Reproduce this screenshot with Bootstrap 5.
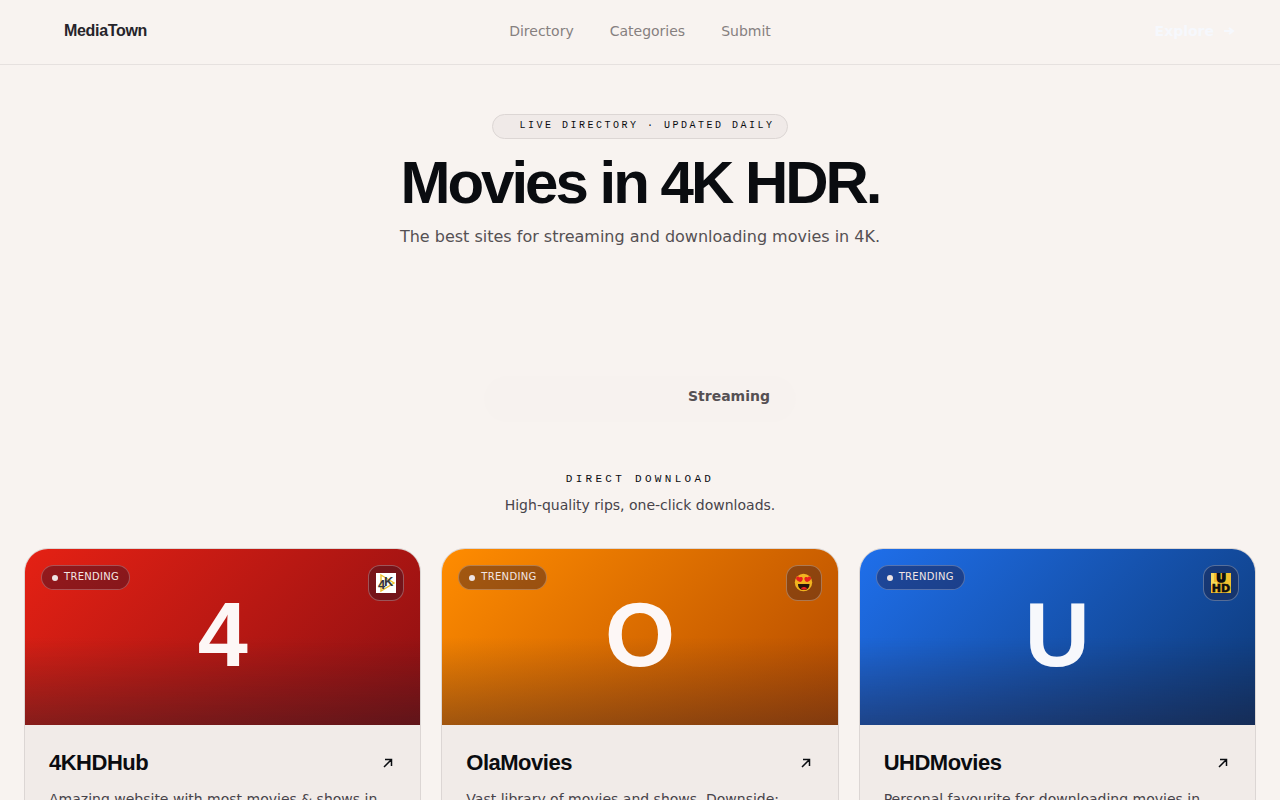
<!DOCTYPE html>
<html lang="en">
<head>
<meta charset="utf-8">
<meta name="viewport" content="width=device-width, initial-scale=1">
<title>MediaTown – Movies in 4K HDR</title>
<link rel="stylesheet" href="https://cdn.jsdelivr.net/npm/bootstrap@5.3.0/dist/css/bootstrap.min.css">
<style>
  body { background: #f8f3f0; color: #0a0c10; font-family: "DejaVu Sans", sans-serif; font-size: 14px; line-height: 20px; }
  .display-face { font-family: "Liberation Sans", sans-serif; font-weight: 700; }
  .mono-face { font-family: "Liberation Mono", monospace; text-transform: uppercase; }
  .topbar { height: 65px; border-bottom: 1px solid #e6e1df; padding: 0 44px 2px; }
  .topbar .side { flex: 1 1 0; }
  .brand { font-size: 16px; letter-spacing: -0.32px; color: #26242a; margin-left: 20px; }
  .topbar .nav-link { color: #86807f; padding: 0; }
  .nav-gap { gap: 36px; }
  .explore { color: #f6f8fd; font-weight: 700; font-size: 14px; border: 0; padding: 0; gap: 10px; }
  .live-pill { background: #f0eae8; border: 1px solid #dcd6d4; border-radius: 13px; height: 25px; font-size: 10px; line-height: 22px; letter-spacing: 2.5px; padding: 0 12px 0 26px; }
  .hero { padding-top: 49px; }
  .hero-title { font-size: 60px; line-height: 60px; letter-spacing: -3px; margin: 14px 0 0; }
  .hero-text { font-size: 16px; line-height: 24px; color: #555053; margin: 12px 0 0; }
  .switcher { margin-top: 127px; background: #f7f2ef; border-radius: 23px; height: 46px; width: 312px; }
  .switcher .btn { border: 0; font-size: 14px; font-weight: 700; color: #555053; padding: 0 0 5px; }
  .switcher .btn-first { width: 178px; }
  .section-label { font-size: 11px; line-height: 16px; letter-spacing: 3.3px; font-weight: 400; margin: 49px 0 0; }
  .section-text { color: #47434a; margin: 8px 0 33px; }
  .site-row { --bs-gutter-x: 20px; --bs-gutter-y: 20px; }
  .site-card { background: #f1ebe8; border: 1px solid #dcd6d4; border-radius: 24px; overflow: hidden; }
  .cover { height: 176px; position: relative; padding-bottom: 4px; }
  .cover-red { background: linear-gradient(transparent 50%, rgba(26, 30, 38, .38)), linear-gradient(135deg, #e52114, #8b0f12); }
  .cover-orange { background: linear-gradient(transparent 50%, rgba(46, 30, 38, .38)), linear-gradient(135deg, #ff8c00, #b34a00); }
  .cover-blue { background: linear-gradient(transparent 50%, rgba(36, 26, 38, .38)), linear-gradient(135deg, #1f6feb, #0d3875); }
  .cover-letter { font-size: 90px; line-height: 90px; color: #fdf7f6; }
  .cover-blue .cover-letter { color: #f7f8fc; }
  .trend { position: absolute; top: 16px; left: 16px; height: 25px; border: 1px solid rgba(255, 255, 255, .25); border-radius: 13px; background: rgba(30, 15, 40, .4); color: #f3e6e4; font-size: 10px; letter-spacing: .3px; line-height: 20px; padding: 0 10px 2px; gap: 6px; }
  .trend-dot { width: 6px; height: 6px; border-radius: 50%; background: #eee4e4; margin-top: 3px; }
  .site-icon { position: absolute; top: 16px; right: 16px; width: 36px; height: 36px; border: 1px solid rgba(255, 255, 255, .28); border-radius: 12px; background: rgba(30, 20, 40, .35); }
  .site-body { padding: 24px; }
  .site-name { font-size: 22px; line-height: 28px; letter-spacing: -0.5px; margin: 0; }
  .site-name a { color: inherit; }
  .site-desc { color: #47434a; line-height: 22px; margin: 11px 0 0; }
</style>
</head>
<body>
<header class="topbar d-flex align-items-center">
  <div class="side"><a href="#" class="brand display-face text-decoration-none">MediaTown</a></div>
  <nav class="nav nav-gap" aria-label="Main">
    <a class="nav-link" href="#directory">Directory</a>
    <a class="nav-link" href="#categories">Categories</a>
    <a class="nav-link" href="#submit">Submit</a>
  </nav>
  <div class="side d-flex justify-content-end">
    <button type="button" class="btn explore d-flex align-items-center">Explore
      <svg width="12" height="12" viewBox="0 0 12 12" fill="none" stroke="currentColor" stroke-width="2" aria-hidden="true"><path d="M0 6h9M5 3l4 3-4 3"/></svg>
    </button>
  </div>
</header>

<main>
  <section class="hero d-flex flex-column align-items-center text-center">
    <div class="live-pill mono-face">Live directory · Updated daily</div>
    <h1 class="hero-title display-face">Movies in 4K HDR.</h1>
    <p class="hero-text">The best sites for streaming and downloading movies in 4K.</p>
    <div class="switcher d-flex" role="group" aria-label="Type of site">
      <button type="button" class="btn btn-first" aria-label="Direct download"></button>
      <button type="button" class="btn flex-grow-1 text-center">Streaming</button>
    </div>
  </section>

  <section id="directory" class="px-4">
    <div class="text-center">
      <h2 class="section-label mono-face">Direct download</h2>
      <p class="section-text">High-quality rips, one-click downloads.</p>
    </div>
    <div class="row site-row row-cols-3">
      <div class="col">
        <article class="site-card">
          <div class="cover cover-red d-flex align-items-center justify-content-center">
            <span class="trend d-flex align-items-center"><span class="trend-dot"></span>TRENDING</span>
            <span class="cover-letter display-face">4</span>
            <span class="site-icon d-flex align-items-center justify-content-center">
              <svg width="20" height="20" viewBox="0 0 20 20" aria-hidden="true"><rect width="20" height="20" fill="#fff"/><path d="M5 2 18 10 5 18z" fill="none" stroke="#edc02c" stroke-width="1.4"/><text x="2" y="16" font-family="Liberation Sans" font-weight="700" font-size="13" fill="#35363c">4</text><text x="8" y="13" font-family="Liberation Sans" font-weight="700" font-size="13" fill="#35363c">K</text></svg>
            </span>
          </div>
          <div class="site-body">
            <div class="d-flex align-items-center justify-content-between">
              <h3 class="site-name display-face"><a class="text-decoration-none" href="#4khdhub">4KHDHub</a></h3>
              <svg width="16" height="16" viewBox="0 0 16 16" fill="none" stroke="#0a0c10" stroke-width="1.5" aria-hidden="true"><path d="M4 12l7-7M5 4.500h6.500V11"/></svg>
            </div>
            <p class="site-desc">Amazing website with most movies &amp; shows in</p>
          </div>
        </article>
      </div>
      <div class="col">
        <article class="site-card">
          <div class="cover cover-orange d-flex align-items-center justify-content-center">
            <span class="trend d-flex align-items-center"><span class="trend-dot"></span>TRENDING</span>
            <span class="cover-letter display-face">O</span>
            <span class="site-icon d-flex align-items-center justify-content-center">
              <svg width="20" height="20" viewBox="0 0 20 20" aria-hidden="true"><circle cx="9.500" cy="9.500" r="8.700" fill="#f2b41f"/><path d="M4 11h11.500c0 4-2.500 6-5.700 6S4 15 4 11z" fill="#26140c"/><path d="M7 15.500c1-2 5-2 6 0-1.500 1.800-4.500 1.800-6 0z" fill="#e8211e"/><path d="M6 9C2.500 7.500 1.700 6 2.200 4.700c.7-1.600 2.800-1.500 3.500-.2 1.200-1 3.300-.4 3.100 1.400C8.700 7.500 7.500 8.500 6 9z" fill="#e8211e"/><path d="M13.200 9c3.500-1.500 4.300-3 3.800-4.300-.7-1.600-2.800-1.500-3.500-.2-1.200-1-3.300-.4-3.100 1.400.1 1.600 1.300 2.600 2.800 3.100z" fill="#e8211e"/></svg>
            </span>
          </div>
          <div class="site-body">
            <div class="d-flex align-items-center justify-content-between">
              <h3 class="site-name display-face"><a class="text-decoration-none" href="#olamovies">OlaMovies</a></h3>
              <svg width="16" height="16" viewBox="0 0 16 16" fill="none" stroke="#0a0c10" stroke-width="1.5" aria-hidden="true"><path d="M4 12l7-7M5 4.500h6.500V11"/></svg>
            </div>
            <p class="site-desc">Vast library of movies and shows. Downside:</p>
          </div>
        </article>
      </div>
      <div class="col">
        <article class="site-card">
          <div class="cover cover-blue d-flex align-items-center justify-content-center">
            <span class="trend d-flex align-items-center"><span class="trend-dot"></span>TRENDING</span>
            <span class="cover-letter display-face">U</span>
            <span class="site-icon d-flex align-items-center justify-content-center">
              <svg width="20" height="20" viewBox="0 0 20 20" aria-hidden="true"><rect width="20" height="20" fill="#f0c02e"/><path d="M0 0h3v9h3v3H0z" fill="#f7d95a"/><text x="10" y="9" text-anchor="middle" font-family="DejaVu Sans" font-weight="700" font-size="12" stroke="#0d0d10" stroke-width="1.500" fill="#0d0d10">U</text><text x="10" y="19" text-anchor="middle" font-family="DejaVu Sans" font-weight="700" font-size="11" stroke="#0d0d10" stroke-width=".6" fill="#0d0d10">HD</text></svg>
            </span>
          </div>
          <div class="site-body">
            <div class="d-flex align-items-center justify-content-between">
              <h3 class="site-name display-face"><a class="text-decoration-none" href="#uhdmovies">UHDMovies</a></h3>
              <svg width="16" height="16" viewBox="0 0 16 16" fill="none" stroke="#0a0c10" stroke-width="1.5" aria-hidden="true"><path d="M4 12l7-7M5 4.500h6.500V11"/></svg>
            </div>
            <p class="site-desc">Personal favourite for downloading movies in</p>
          </div>
        </article>
      </div>
    </div>
  </section>
</main>
<script src="https://cdn.jsdelivr.net/npm/bootstrap@5.3.0/dist/js/bootstrap.bundle.min.js"></script>
</body>
</html>
